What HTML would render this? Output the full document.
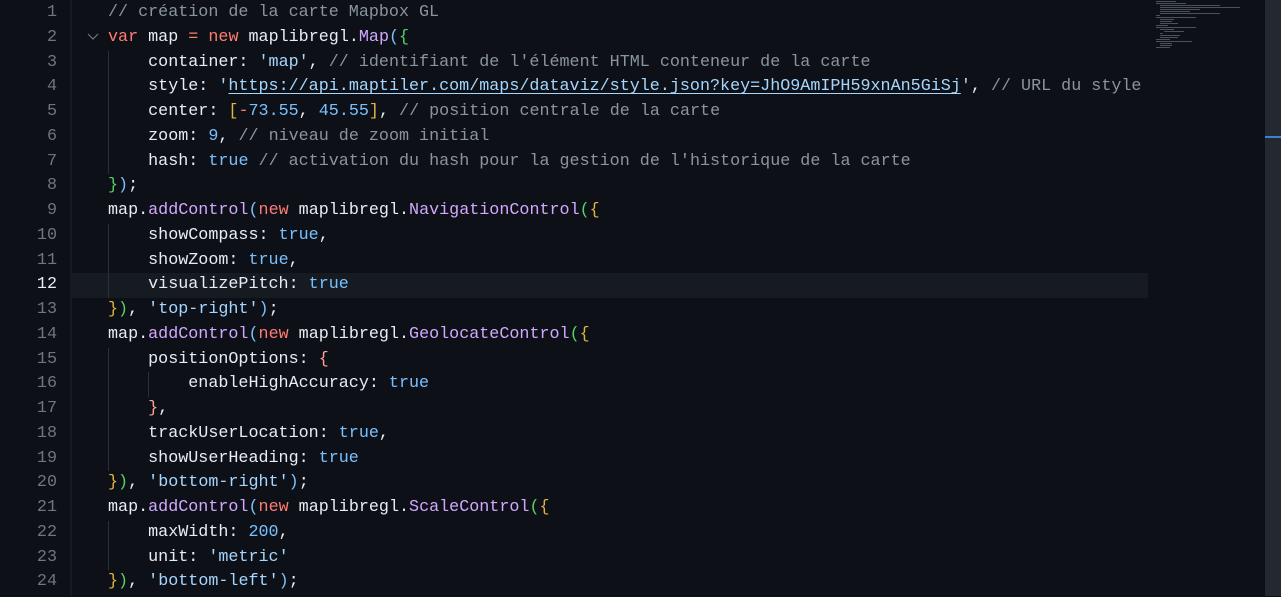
<!DOCTYPE html>
<html><head><meta charset="utf-8"><style>
body{margin:0;width:1281px;height:596px;overflow:hidden;background:#0d1117;font-family:"Liberation Mono",monospace;font-size:16.73px;}
.g{position:absolute;left:0;top:1px;width:70px;height:596px;}
.sep{position:absolute;left:70px;top:0;width:2px;height:596px;background:#161b22;}
.ln{position:absolute;left:0;width:57px;text-align:right;color:#6e7681;height:24.75px;line-height:24.75px;}
.code{position:absolute;left:108px;top:1px;}
.l{height:24.75px;line-height:24.75px;white-space:pre;color:#e6edf3;}
.cur{position:absolute;left:72px;width:1076px;height:24.75px;background:#161b22;}
.c{color:#8b949e}.k{color:#ff7b72}.s{color:#a5d6ff}.f{color:#d2a8ff}.n{color:#79c0ff}
.b1{color:#79c0ff}.b2{color:#56d364}.b3{color:#e3b341}.b4{color:#ffa198}
.u{text-decoration:underline;text-underline-offset:3px}
.guide{position:absolute;width:1px;background:#2b3036;}
.mini{position:absolute;left:1148px;top:0;width:117px;height:596px;background:#0d1117;}
.sb{position:absolute;left:1265px;top:0;width:16px;height:596px;background:#24292f;}
</style></head><body>
<div class="cur" style="top:273px"></div>
<div class="sep"></div>
<div class="guide" style="left:108px;top:50.5px;height:123.75px"></div>
<div class="guide" style="left:108px;top:223.75px;height:74.25px"></div>
<div class="guide" style="left:108px;top:347.5px;height:123.75px"></div>
<div class="guide" style="left:148px;top:372.25px;height:24.75px"></div>
<div class="guide" style="left:108px;top:520.75px;height:49.5px"></div>
<div class="g">
<div class="ln" style="top:0">1</div><div class="ln" style="top:24.75px">2</div><div class="ln" style="top:49.5px">3</div><div class="ln" style="top:74.25px">4</div><div class="ln" style="top:99px">5</div><div class="ln" style="top:123.75px">6</div><div class="ln" style="top:148.5px">7</div><div class="ln" style="top:173.25px">8</div><div class="ln" style="top:198px">9</div><div class="ln" style="top:222.75px">10</div><div class="ln" style="top:247.5px">11</div><div class="ln" style="top:272.25px;color:#e6edf3">12</div><div class="ln" style="top:297px">13</div><div class="ln" style="top:321.75px">14</div><div class="ln" style="top:346.5px">15</div><div class="ln" style="top:371.25px">16</div><div class="ln" style="top:396px">17</div><div class="ln" style="top:420.75px">18</div><div class="ln" style="top:445.5px">19</div><div class="ln" style="top:470.25px">20</div><div class="ln" style="top:495px">21</div><div class="ln" style="top:519.75px">22</div><div class="ln" style="top:544.5px">23</div><div class="ln" style="top:569.25px">24</div>
</div>
<svg style="position:absolute;left:87px;top:32px" width="12" height="10"><path d="M1 2 L6 7 L11 2" stroke="#6e7681" stroke-width="1.2" fill="none"/></svg>
<div class="code">
<div class="l"><span class="c">// création de la carte Mapbox GL</span></div>
<div class="l"><span class="k">var</span> map <span class="k">=</span> <span class="k">new</span> maplibregl.<span class="f">Map</span><span class="b1">(</span><span class="b2">{</span></div>
<div class="l">    container: <span class="s">'map'</span>, <span class="c">// identifiant de l'élément HTML conteneur de la carte</span></div>
<div class="l">    style: <span class="s">'<span class="u">https://api.maptiler.com/maps/dataviz/style.json?key=JhO9AmIPH59xnAn5GiSj</span>'</span>, <span class="c">// URL du style</span></div>
<div class="l">    center: <span class="b3">[</span><span class="k">-</span><span class="n">73.55</span>, <span class="n">45.55</span><span class="b3">]</span>, <span class="c">// position centrale de la carte</span></div>
<div class="l">    zoom: <span class="n">9</span>, <span class="c">// niveau de zoom initial</span></div>
<div class="l">    hash: <span class="n">true</span> <span class="c">// activation du hash pour la gestion de l'historique de la carte</span></div>
<div class="l"><span class="b2">}</span><span class="b1">)</span>;</div>
<div class="l">map.<span class="f">addControl</span><span class="b1">(</span><span class="k">new</span> maplibregl.<span class="f">NavigationControl</span><span class="b2">(</span><span class="b3">{</span></div>
<div class="l">    showCompass: <span class="n">true</span>,</div>
<div class="l">    showZoom: <span class="n">true</span>,</div>
<div class="l">    visualizePitch: <span class="n">true</span></div>
<div class="l"><span class="b3">}</span><span class="b2">)</span>, <span class="s">'top-right'</span><span class="b1">)</span>;</div>
<div class="l">map.<span class="f">addControl</span><span class="b1">(</span><span class="k">new</span> maplibregl.<span class="f">GeolocateControl</span><span class="b2">(</span><span class="b3">{</span></div>
<div class="l">    positionOptions: <span class="b4">{</span></div>
<div class="l">        enableHighAccuracy: <span class="n">true</span></div>
<div class="l">    <span class="b4">}</span>,</div>
<div class="l">    trackUserLocation: <span class="n">true</span>,</div>
<div class="l">    showUserHeading: <span class="n">true</span></div>
<div class="l"><span class="b3">}</span><span class="b2">)</span>, <span class="s">'bottom-right'</span><span class="b1">)</span>;</div>
<div class="l">map.<span class="f">addControl</span><span class="b1">(</span><span class="k">new</span> maplibregl.<span class="f">ScaleControl</span><span class="b2">(</span><span class="b3">{</span></div>
<div class="l">    maxWidth: <span class="n">200</span>,</div>
<div class="l">    unit: <span class="s">'metric'</span></div>
<div class="l"><span class="b3">}</span><span class="b2">)</span>, <span class="s">'bottom-left'</span><span class="b1">)</span>;</div>
</div>
<div class="mini">
<svg width="117" height="50" style="position:absolute;left:8px;top:0">
<g fill="#5a626c" opacity="0.8">
<rect x="0" y="1" width="20" height="1"/><rect x="0" y="3" width="30" height="1"/><rect x="4" y="5" width="60" height="1"/><rect x="4" y="7" width="80" height="1"/><rect x="4" y="9" width="40" height="1"/><rect x="4" y="11" width="30" height="1"/><rect x="4" y="13" width="60" height="1"/><rect x="0" y="15" width="4" height="1"/><rect x="0" y="17" width="40" height="1"/><rect x="4" y="19" width="14" height="1"/><rect x="4" y="21" width="12" height="1"/><rect x="4" y="23" width="18" height="1"/><rect x="0" y="25" width="12" height="1"/><rect x="0" y="27" width="40" height="1"/><rect x="4" y="29" width="14" height="1"/><rect x="8" y="31" width="20" height="1"/><rect x="4" y="33" width="3" height="1"/><rect x="4" y="35" width="20" height="1"/><rect x="4" y="37" width="18" height="1"/><rect x="0" y="39" width="14" height="1"/><rect x="0" y="41" width="36" height="1"/><rect x="4" y="43" width="12" height="1"/><rect x="4" y="45" width="12" height="1"/><rect x="0" y="47" width="14" height="1"/>
</g></svg>
</div>
<div class="sb"><div style="position:absolute;left:0;top:136px;width:16px;height:2px;background:#3b82d6"></div></div>
</body></html>
